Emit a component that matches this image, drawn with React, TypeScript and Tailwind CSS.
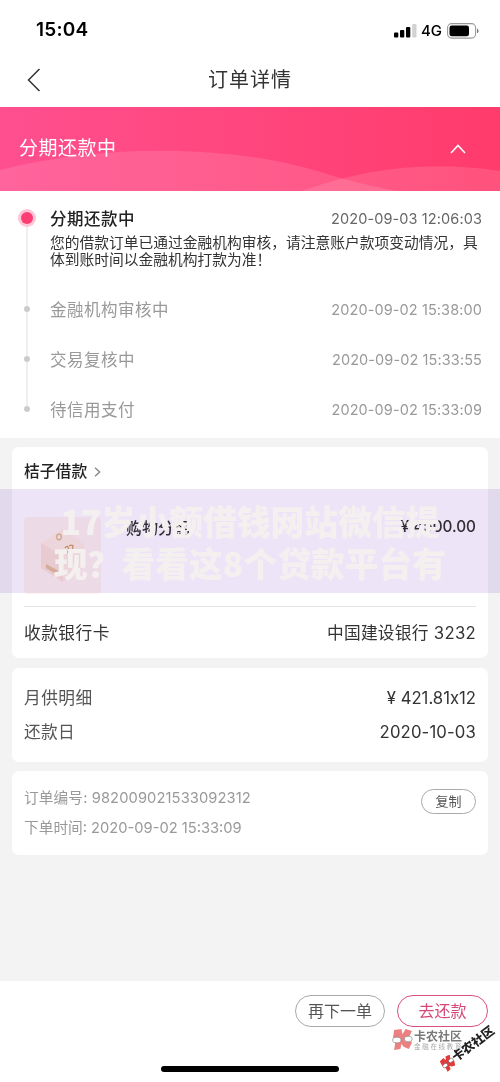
import { clsx } from 'clsx';

interface Step {
  title: string;
  time: string;
  desc?: string;
}

const steps: Step[] = [
  {
    title: '分期还款中',
    time: '2020-09-03 12:06:03',
    desc: '您的借款订单已通过金融机构审核，请注意账户款项变动情况，具体到账时间以金融机构打款为准！',
  },
  { title: '金融机构审核中', time: '2020-09-02 15:38:00' },
  { title: '交易复核中', time: '2020-09-02 15:33:55' },
  { title: '待信用支付', time: '2020-09-02 15:33:09' },
];

const StatusBar = () => (
  <div className="flex h-[52px] items-center justify-between pt-[9px] pr-[20px] pl-[36px] text-black">
    <span className="text-[19px] font-semibold tracking-[0.2px]">15:04</span>
    <div className="flex items-center">
      <svg width="23" height="14" viewBox="0 0 23 14">
        <rect x="0" y="8.5" width="4.3" height="5" rx="1" />
        <rect x="6" y="6" width="4.3" height="7.5" rx="1" />
        <rect x="12" y="3" width="4.3" height="10.5" rx="1" />
        <rect x="18.2" y="0" width="4.3" height="13.5" rx="1" fill="#d2d2d2" />
      </svg>
      <span className="ml-[4px] w-[22px] pt-px text-[15px] font-medium">4G</span>
      <svg className="ml-[4px]" width="33" height="16" viewBox="0 0 33 16">
        <rect x="0.6" y="0.6" width="28" height="14.5" rx="4" fill="none" stroke="#999" strokeWidth="1.1" />
        <rect x="2.5" y="2.5" width="19.5" height="10.7" rx="2.2" />
        <path d="M30 5.5c2 .8 2 4 0 4.8z" fill="#777" />
      </svg>
    </div>
  </div>
);

const NavBar = () => (
  <div className="grid h-[55px] grid-cols-[60px_1fr_60px] items-center">
    <svg className="ml-[27px]" width="14" height="24" viewBox="0 0 14 24" fill="none" stroke="#333" strokeWidth="1.5">
      <path d="M12.5 1L1.5 12l11 11" />
    </svg>
    <h1 className="text-center text-[20px] tracking-[1px] text-[#333]">订单详情</h1>
  </div>
);

const Banner = () => (
  <div className="relative h-[84px] overflow-hidden bg-linear-to-r from-[#ff4f8f] to-[#ff3b6b]">
    <svg className="absolute inset-0" width="500" height="84" viewBox="0 0 500 84">
      <path d="M0 63C100 37 235 36 330 68Q360 77 397 84H0Z" fill="#fff" fillOpacity="0.12" />
      <path d="M302 84C370 60 430 54 500 64V84Z" fill="#fff" fillOpacity="0.12" />
    </svg>
    <div className="relative flex h-full items-center justify-between pr-[34px] pl-[19px]">
      <span className="text-[19px] tracking-[0.5px] text-white">分期还款中</span>
      <svg width="16" height="10" viewBox="0 0 16 10" fill="none" stroke="#fff" strokeWidth="1.6">
        <path d="M1 9l7-7.5L15 9" />
      </svg>
    </div>
  </div>
);

const Timeline = () => (
  <div className="h-[247px] bg-white pt-[14px] pr-[18px] pl-[18px]">
    {steps.map((step, i) => {
      const active = i === 0;
      const last = i === steps.length - 1;
      return (
        <div key={step.title} className={clsx('flex', active ? 'h-[91px]' : 'h-[50px]')}>
          <div className="relative flex w-[18px] shrink-0 justify-center">
            {!last && (
              <div className={clsx('absolute top-[13px] w-[2px] bg-[#edf0f3]', active ? 'h-[92px]' : 'h-[50px]')} />
            )}
            {active ? (
              <div className="relative mt-[4px] size-[18px] rounded-full bg-[#ffc5d6] p-[3px]">
                <div className="size-[12px] rounded-full bg-[#fb3e73]" />
              </div>
            ) : (
              <div className="relative mt-[10px] size-[6px] rounded-full bg-[#ccc]" />
            )}
          </div>
          <div className="ml-[14px] flex-1">
            <div className="flex h-[28px] items-center justify-between">
              <span
                className={clsx('text-[16.5px] tracking-[0.5px]', active ? 'font-medium text-[#222]' : 'text-[#999]')}
              >
                {step.title}
              </span>
              <span className={clsx('text-[14.5px] tracking-[0.1px]', active ? 'text-[#666]' : 'text-[#999]')}>
                {step.time}
              </span>
            </div>
            {step.desc && (
              <p className="mt-[2px] w-[432px] text-[14.75px] leading-[17px] text-[#333]">{step.desc}</p>
            )}
          </div>
        </div>
      );
    })}
  </div>
);

const GiftBox = () => (
  <div className="size-[77px] rounded-[4px] bg-[#fff4ee]">
    <svg width="77" height="77" viewBox="0 0 77 77">
      <path d="M17 26L39 12l21 14v24L39 65 17 51z" fill="#fff0e2" />
      <path d="M17 26l22 13v26L17 51z" fill="#fae3d6" />
      <path d="M39 39l21-13v24L39 65z" fill="#ffeee2" />
      <ellipse cx="35" cy="20" rx="2.3" ry="2.8" fill="none" stroke="#dcb687" strokeWidth="1.2" />
      <path d="M22 47l13 7v5l-13-8z" fill="#e6bf9f" />
      <path d="M41 31q3-4 4 2l-3 4M45 29q6-3 3 4" fill="none" stroke="#d09b66" strokeWidth="1.3" />
    </svg>
  </div>
);

// translucent promo strip lying over the loan card
const PromoOverlay = () => (
  <>
    <div className="absolute top-[489px] left-0 h-[104px] w-full bg-[#ede4f8] mix-blend-multiply" />
    <div className="absolute top-[489px] left-0 flex h-[104px] w-full flex-col items-center pt-[11px] font-['Noto_Sans_CJK_SC',sans-serif] text-[33.8px] leading-[42px] font-black whitespace-nowrap text-[#f4f0f0]">
      <span>17岁小额借钱网站微信提</span>
      <span>现？看看这8个贷款平台有</span>
    </div>
  </>
);

const LoanCard = () => (
  <div className="h-[211px] rounded-[7px] bg-white px-[12px] pt-[13px] text-[#333]">
    <div className="flex h-[24px] items-center text-[15.8px] font-medium text-[#222]">
      桔子借款
      <svg className="ml-[7px]" width="7" height="10" viewBox="0 0 7 10" fill="none" stroke="#888" strokeWidth="1.4">
        <path d="M1 .7L5.7 5 1 9.3" />
      </svg>
    </div>
    <div className="mt-[33px] flex h-[90px] border-b border-[#e4e4e4]">
      <GiftBox />
      <div className="ml-[25px] flex h-[21px] flex-1 items-center justify-between text-[16px] font-medium">
        <span>购物分期</span>
        <span className="text-[15.3px]">¥ 4500.00</span>
      </div>
    </div>
    <div className="flex h-[53px] items-center justify-between text-[16.7px] tracking-[0.5px]">
      <span>收款银行卡</span>
      <span className="tracking-[0.3px]">中国建设银行 3232</span>
    </div>
  </div>
);

const RepayCard = () => (
  <div className="mt-[10px] h-[94px] rounded-[7px] bg-white px-[12px] pt-[14px] text-[16.7px] [font-feature-settings:'calt'_0]">
    <div className="flex h-[34px] items-center justify-between">
      <span className="tracking-[0.5px] text-[#555]">月供明细</span>
      <span className="text-[#333]">¥ 421.81x12</span>
    </div>
    <div className="flex h-[34px] items-center justify-between">
      <span className="tracking-[0.3px] text-[#555]">还款日</span>
      <span className="tracking-[0.15px] text-[#333]">2020-10-03</span>
    </div>
  </div>
);

const OrderCard = () => (
  <div className="mt-[9px] flex h-[84px] justify-between rounded-[7px] bg-white px-[12px] pt-[13px]">
    <div className="text-[14.7px] leading-[29.5px] text-[#999]">
      <p className="tracking-[0.1px]">订单编号: 982009021533092312</p>
      <p>下单时间: 2020-09-02 15:33:09</p>
    </div>
    <button className="mt-[5px] h-[25px] w-[55px] rounded-full border border-[#aaa] text-[13px] text-[#555]">
      复制
    </button>
  </div>
);

const KMark = ({ className, size }: { className?: string; size: number }) => (
  <svg className={className} width={size} height={size} viewBox="0 0 20 20">
    <path d="M2 1l7-1 1 5 3-5 6 2-3 6 3 5-3 6-5-2-2-3-1 5-6 1 1-6-2-6z" fill="#e23b3b" />
    <ellipse cx="4.6" cy="10.5" rx="4" ry="2.7" fill="#fff" stroke="#555" strokeWidth="0.7" />
    <ellipse cx="15.5" cy="9.5" rx="3.8" ry="2.7" fill="#fff" stroke="#555" strokeWidth="0.7" />
  </svg>
);

const Watermarks = () => (
  <>
    <div className="absolute top-[1029px] left-[392px] flex items-start opacity-65">
      <KMark size={21} />
      <div className="ml-[1px] whitespace-nowrap">
        <div className="text-[12px] leading-[15px] font-bold text-[#333]">卡农社区</div>
        <div className="text-[6.5px] leading-[6px] tracking-[1.7px] text-[#777]">金融在线教育</div>
      </div>
    </div>
    <div className="absolute top-[1041px] left-[436px] flex w-[64px] origin-center rotate-[-37deg] items-center whitespace-nowrap">
      <KMark size={14} />
      <span className="text-[12.3px] leading-[14px] font-black text-[#222]">卡农社区</span>
    </div>
  </>
);

const Footer = () => (
  <div className="flex h-[101px] flex-col justify-between bg-white pt-[14px] pb-[10px]">
    <div className="flex justify-end gap-[12px] pr-[12px] text-[16px]">
      <button className="h-[32px] w-[90px] rounded-full border border-[#aaa] text-[#555]">再下一单</button>
      <button className="h-[32px] w-[91px] rounded-full border border-[#d94f7f] text-[#d4487a]">去还款</button>
    </div>
    <div className="mx-auto h-[6px] w-[178px] rounded-full bg-black" />
  </div>
);

export default function App() {
  return (
    <div className="relative flex h-[1082px] w-[500px] flex-col overflow-hidden bg-[#f3f3f3] font-[Inter,'Noto_Sans_CJK_SC',sans-serif]">
      <div className="bg-white">
        <StatusBar />
        <NavBar />
      </div>
      <Banner />
      <Timeline />
      <main className="flex-1 px-[12px] pt-[9px]">
        <LoanCard />
        <RepayCard />
        <OrderCard />
      </main>
      <Footer />
      <PromoOverlay />
      <Watermarks />
    </div>
  );
}
